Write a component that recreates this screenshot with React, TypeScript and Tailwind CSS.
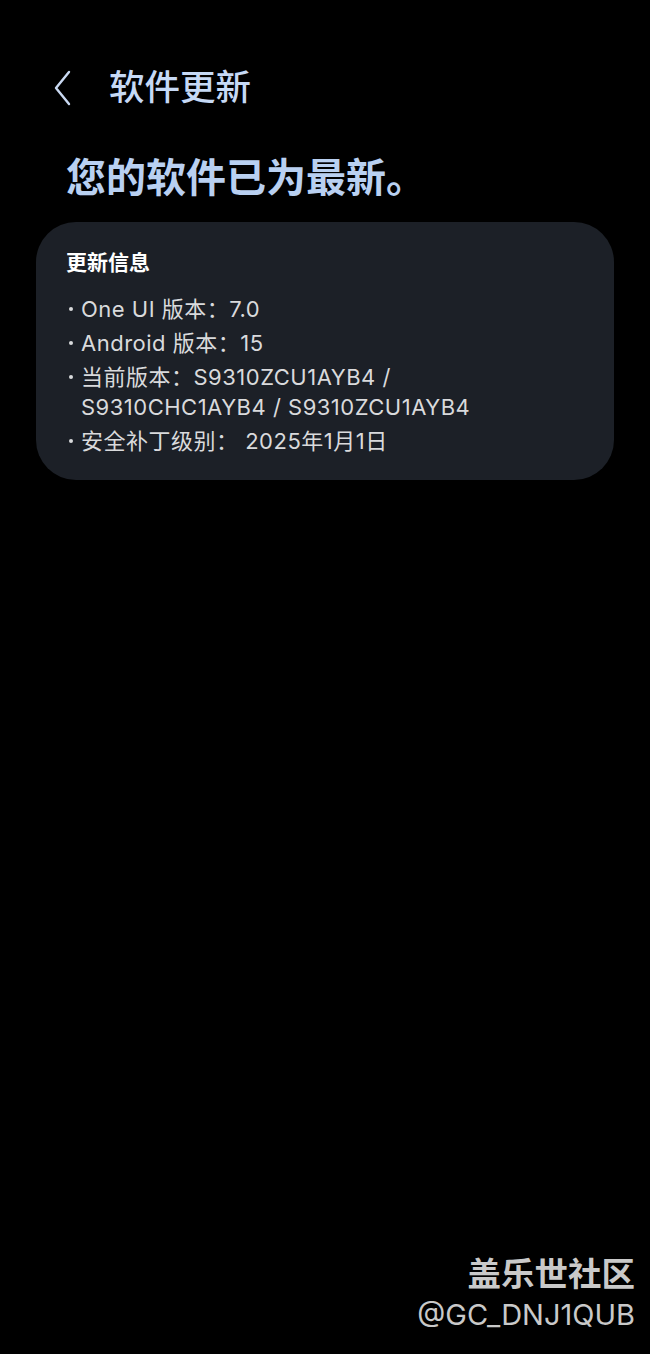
const FONT = "font-['Inter','Noto_Sans_CJK_SC',sans-serif]"

const INFO_LINES: string[][] = [
  ["One UI 版本：7.0"],
  ["Android 版本：15"],
  ["当前版本：S9310ZCU1AYB4 /", "S9310CHC1AYB4 / S9310ZCU1AYB4"],
  ["安全补丁级别： 2025年1月1日"],
]

function BackIcon() {
  return (
    <svg width="22" height="36" viewBox="0 0 22 36" fill="none">
      <path d="M17 2 L4 18 L17 34" stroke="#c9d9f2" strokeWidth="2.4" strokeLinecap="round" strokeLinejoin="round" />
    </svg>
  )
}

export default function App() {
  return (
    <div className={`${FONT} flex h-[1354px] w-[650px] flex-col bg-black`}>
      <header className="flex items-center pl-[52px] pt-[70px]">
        <BackIcon />
        <h1 className="ml-[35px] text-[35.5px] font-medium leading-[36px] text-[#c6d9f5]">软件更新</h1>
      </header>

      <h2 className="ml-[66px] mt-[48px] text-[40px] font-bold leading-[48px] text-[#b9d0f1]">
        您的软件已为最新。
      </h2>

      <section className="mx-[36px] mt-[20px] rounded-[40px] bg-[#1c2027] pb-[22px] pl-[30px] pr-4 pt-[26px]">
        <h3 className="text-[21px] font-bold leading-[30px] text-white">更新信息</h3>
        <ul className="mt-[14px]">
          {INFO_LINES.map((lines, i) => (
            <li key={i} className="flex text-[22px] leading-[34px] tracking-[0.5px] text-[#d9dadc]">
              <span className="flex h-[34px] w-[15px] shrink-0 items-center pl-[3px]">
                <span className="h-[4px] w-[4px] rounded-full bg-[#d9dadc]" />
              </span>
              <span className="flex flex-col">
                {lines.map((line, j) => (
                  <span key={j} className={j > 0 ? "-mt-[4px]" : ""}>{line}</span>
                ))}
              </span>
            </li>
          ))}
        </ul>
      </section>

      <footer className="mt-auto flex flex-col items-end pb-[20px] pr-[15px]">
        <span className="text-[33.5px] font-bold leading-[40px] text-[#c9c9c9]">盖乐世社区</span>
        <span className="mt-[2px] text-[29px] leading-[38px] text-[#c9c9c9]">@GC_DNJ1QUB</span>
      </footer>
    </div>
  )
}
